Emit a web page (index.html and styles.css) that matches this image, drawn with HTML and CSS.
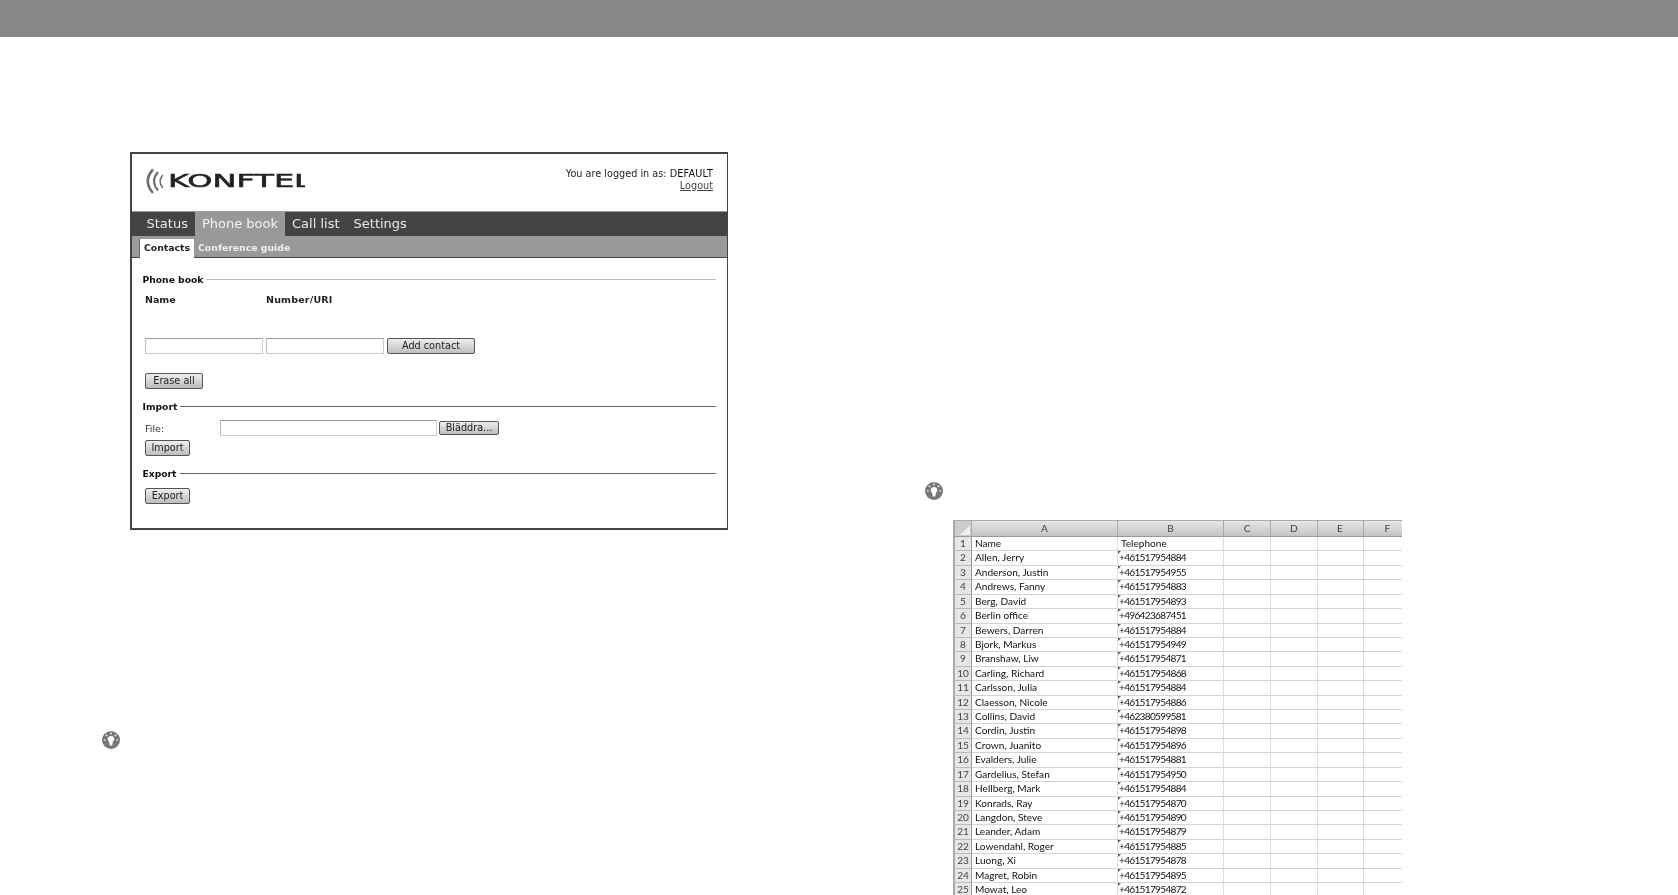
FILE: index.html
```html
<!DOCTYPE html>
<html lang="en">
<head>
<meta charset="utf-8">
<title>Konftel web interface</title>
<link rel="stylesheet" href="styles.css">
</head>
<body>
<div class="topbar"></div>
<main class="columns">
  <section class="col-left">
    <div class="frame">
      <header class="brand">
        <svg class="logo" width="160" height="30" viewBox="0 0 160 30">
          <g fill="none" stroke="#6e6e6e">
            <path d="M8 1.500 Q-2.500 13 8 25" stroke-width="2.600"/>
            <path d="M13 4 Q5 13 13 22.500" stroke-width="2"/>
            <path d="M18 7 Q12 13 18 20" stroke-width="1.500"/>
          </g>
          <text class="logo-text" x="23" y="19" textLength="144" lengthAdjust="spacingAndGlyphs">KONFTEL</text>
        </svg>
        <div class="login">
          <div>You are logged in as: <span class="user">DEFAULT</span></div>
          <a class="logout">Logout</a>
        </div>
      </header>
      <nav class="nav">
        <span class="nav-item">Status</span>
        <span class="nav-item active">Phone book</span>
        <span class="nav-item">Call list</span>
        <span class="nav-item">Settings</span>
      </nav>
      <div class="subnav">
        <span class="tab active">Contacts</span>
        <span class="tab">Conference guide</span>
      </div>
      <div class="panel">
        <div class="legend light"><b>Phone book</b><i></i></div>
        <div class="col-titles"><b class="t-name">Name</b><b class="t-number">Number/URI</b></div>
        <div class="add-row">
          <span class="input w-118"></span>
          <span class="input w-118"></span>
          <span class="btn w-88">Add contact</span>
        </div>
        <div class="erase-row"><span class="btn w-58">Erase all</span></div>
        <div class="legend import"><b>Import</b><i></i></div>
        <div class="file-row">
          <span class="file-label">File:</span>
          <span class="input w-217"></span>
          <span class="btn small w-60">Bläddra...</span>
        </div>
        <div class="import-row"><span class="btn w-45">Import</span></div>
        <div class="legend export"><b>Export</b><i></i></div>
        <div class="export-row"><span class="btn w-45">Export</span></div>
      </div>
    </div>
    <svg class="tip tip-left" width="20" height="20" viewBox="0 0 20 20"><use href="#bulb"/></svg>
  </section>
  <section class="col-right">
    <svg class="tip" width="20" height="20" viewBox="0 0 20 20">
      <g id="bulb">
        <circle cx="10" cy="10" r="9" fill="#777"/>
        <path d="M10 6a3.300 3.300 0 0 1 1.800 6.100L11.300 15.500H8.700L8.200 12.100A3.300 3.300 0 0 1 10 6z" fill="#fff"/>
        <path d="M10 2.300V4.500M4.700 4.700l1.500 1.500M15.300 4.700l-1.500 1.500M2.800 10h2M15.200 10h2" stroke="#fff" stroke-width="1.200"/>
      </g>
    </svg>
    <div class="sheet" id="sheet">
      <div class="h corner"></div><div class="h">A</div><div class="h">B</div><div class="h">C</div><div class="h">D</div><div class="h">E</div><div class="h last">F</div>
      <div class="n">1</div><div class="c">Name</div><div class="c">Telephone</div><div class="c"></div><div class="c"></div><div class="c"></div><div class="c"></div>
      <div class="n">2</div><div class="c">Allen, Jerry</div><div class="c p">+461517954884</div><div class="c"></div><div class="c"></div><div class="c"></div><div class="c"></div>
      <div class="n">3</div><div class="c">Anderson, Justin</div><div class="c p">+461517954955</div><div class="c"></div><div class="c"></div><div class="c"></div><div class="c"></div>
      <div class="n">4</div><div class="c">Andrews, Fanny</div><div class="c p">+461517954883</div><div class="c"></div><div class="c"></div><div class="c"></div><div class="c"></div>
      <div class="n">5</div><div class="c">Berg, David</div><div class="c p">+461517954893</div><div class="c"></div><div class="c"></div><div class="c"></div><div class="c"></div>
      <div class="n">6</div><div class="c">Berlin office</div><div class="c p">+496423687451</div><div class="c"></div><div class="c"></div><div class="c"></div><div class="c"></div>
      <div class="n">7</div><div class="c">Bewers, Darren</div><div class="c p">+461517954884</div><div class="c"></div><div class="c"></div><div class="c"></div><div class="c"></div>
      <div class="n">8</div><div class="c">Bjork, Markus</div><div class="c p">+461517954949</div><div class="c"></div><div class="c"></div><div class="c"></div><div class="c"></div>
      <div class="n">9</div><div class="c">Branshaw, Liw</div><div class="c p">+461517954871</div><div class="c"></div><div class="c"></div><div class="c"></div><div class="c"></div>
      <div class="n">10</div><div class="c">Carling, Richard</div><div class="c p">+461517954868</div><div class="c"></div><div class="c"></div><div class="c"></div><div class="c"></div>
      <div class="n">11</div><div class="c">Carlsson, Julia</div><div class="c p">+461517954884</div><div class="c"></div><div class="c"></div><div class="c"></div><div class="c"></div>
      <div class="n">12</div><div class="c">Claesson, Nicole</div><div class="c p">+461517954886</div><div class="c"></div><div class="c"></div><div class="c"></div><div class="c"></div>
      <div class="n">13</div><div class="c">Collins, David</div><div class="c p">+462380599581</div><div class="c"></div><div class="c"></div><div class="c"></div><div class="c"></div>
      <div class="n">14</div><div class="c">Cordin, Justin</div><div class="c p">+461517954898</div><div class="c"></div><div class="c"></div><div class="c"></div><div class="c"></div>
      <div class="n">15</div><div class="c">Crown, Juanito</div><div class="c p">+461517954896</div><div class="c"></div><div class="c"></div><div class="c"></div><div class="c"></div>
      <div class="n">16</div><div class="c">Evalders, Julie</div><div class="c p">+461517954881</div><div class="c"></div><div class="c"></div><div class="c"></div><div class="c"></div>
      <div class="n">17</div><div class="c">Gardelius, Stefan</div><div class="c p">+461517954950</div><div class="c"></div><div class="c"></div><div class="c"></div><div class="c"></div>
      <div class="n">18</div><div class="c">Hellberg, Mark</div><div class="c p">+461517954884</div><div class="c"></div><div class="c"></div><div class="c"></div><div class="c"></div>
      <div class="n">19</div><div class="c">Konrads, Ray</div><div class="c p">+461517954870</div><div class="c"></div><div class="c"></div><div class="c"></div><div class="c"></div>
      <div class="n">20</div><div class="c">Langdon, Steve</div><div class="c p">+461517954890</div><div class="c"></div><div class="c"></div><div class="c"></div><div class="c"></div>
      <div class="n">21</div><div class="c">Leander, Adam</div><div class="c p">+461517954879</div><div class="c"></div><div class="c"></div><div class="c"></div><div class="c"></div>
      <div class="n">22</div><div class="c">Lowendahl, Roger</div><div class="c p">+461517954885</div><div class="c"></div><div class="c"></div><div class="c"></div><div class="c"></div>
      <div class="n">23</div><div class="c">Luong, Xi</div><div class="c p">+461517954878</div><div class="c"></div><div class="c"></div><div class="c"></div><div class="c"></div>
      <div class="n">24</div><div class="c">Magret, Robin</div><div class="c p">+461517954895</div><div class="c"></div><div class="c"></div><div class="c"></div><div class="c"></div>
      <div class="n">25</div><div class="c">Mowat, Leo</div><div class="c p">+461517954872</div><div class="c"></div><div class="c"></div><div class="c"></div><div class="c"></div>
    </div>
  </section>
</main>
</body>
</html>
```
FILE: styles.css
```css
html, body { margin: 0; padding: 0; height: 895px; overflow: hidden; background: #fff; }
body { font-family: "DejaVu Sans", sans-serif; color: #222; }

.topbar { height: 37px; background: #888785; }
.columns { display: grid; grid-template-columns: 822px 1fr; }

.col-left { padding: 115px 0 0 101px; }
.col-right { padding: 444px 0 0 102px; }

.tip { display: block; }
.tip-left { margin-top: 200px; }

/* Konftel window */
.frame {
  margin-left: 29px; width: 595px; height: 374px;
  border: 2px solid #444; border-right-width: 1.500px;
  filter: blur(0.35px);
}
.brand { display: flex; justify-content: space-between; border-bottom: 1px solid #999; box-sizing: border-box; height: 58px; }
.logo { margin: 14px 0 0 13px; }
.logo-text { font-family: "DejaVu Sans", sans-serif; font-size: 17px; font-weight: 400; fill: #222; stroke: #222; stroke-width: 0.5px; }
.login { padding: 14px 14px 0 0; text-align: right; font-size: 9.700px; line-height: 12px; color: #222; }
.user { color: #111; letter-spacing: 0.2px; }
.logout { text-decoration: underline; color: #444; }

.nav { display: flex; height: 24px; padding-left: 7.500px; background: #444; align-items: stretch; }
.nav-item { padding: 0 7px; font-size: 13px; line-height: 24px; color: #e8e8e8; }
.nav-item.active { background: #999; color: #f2f2f2; }

.subnav { display: flex; height: 22px; box-sizing: border-box; padding-left: 7px; padding-top: 3px; background: #999; border-bottom: 1px solid #444; }
.tab { padding: 0 4px; font-size: 9.300px; font-weight: 700; line-height: 18px; color: #eee; }
.tab.active { background: #fff; color: #222; height: 19px; border-left: 1px solid #666; box-sizing: border-box; }

.panel { padding: 14px 11px 0 10.500px; font-size: 9.500px; }
.legend { display: flex; align-items: center; gap: 3px; height: 14px; color: #111; font-size: 9.200px; }
.legend b { font-weight: 700; }
.legend i { flex: 1; height: 1px; background: #666; }
.legend.light i { background: #bbb; }
.col-titles { display: flex; margin: 7px 0 0 2.500px; font-weight: 700; color: #222; line-height: 14px; }
.t-name { width: 121px; }
.t-number { letter-spacing: 0.2px; }
.add-row { display: flex; gap: 3px; margin: 31px 0 0 2.500px; }
.erase-row { margin: 19px 0 0 2.500px; }
.file-row { display: flex; align-items: center; margin: 7px 0 0 2.500px; }
.file-label { width: 75px; color: #333; }
.import-row { margin: 4px 0 0 2.500px; }
.export-row { margin: 8px 0 0 2.500px; }
.legend.import { margin-top: 10px; }
.legend.export { margin-top: 10px; }

.input { display: block; box-sizing: border-box; height: 16px; border: 1px solid #ccc; border-top-color: #999; border-left-color: #bbb; background: #fff; }
.btn {
  display: block; box-sizing: border-box; height: 16px;
  border: 1px solid #555; border-radius: 2px;
  background: linear-gradient(#eee, #bdbdbd);
  text-align: center; font-size: 9.700px; line-height: 14px; color: #222;
}
.btn.small { height: 14px; line-height: 12px; margin-left: 2px; }
.w-118 { width: 118px; }
.w-217 { width: 217px; }
.w-88 { width: 88px; }
.w-60 { width: 60px; }
.w-58 { width: 58px; }
.w-45 { width: 45px; }

/* Spreadsheet */
.sheet {
  margin: 19px 0 0 29px; width: 449px; height: 380px; overflow: hidden;
  display: grid; grid-template-columns: 19px 146px 106px 47px 46.500px 46px 38.500px;
  grid-template-rows: 16px; grid-auto-rows: 14.430px;
  border-top: 1px solid #aaa;
  font-family: "Lato", sans-serif; font-size: 10.100px; color: #111;
  filter: blur(0.3px);
}
.h {
  background: linear-gradient(#e6e6e6, #c4c4c4);
  border-right: 1px solid #aaa; border-bottom: 1px solid #999;
  text-align: center; line-height: 14px; color: #444; box-sizing: border-box;
}
.h.last { border-right: 0; padding-left: 9px; }
.corner { background: #ccc; border-left: 2px solid #aaa; position: relative; }
.corner::after {
  content: ""; position: absolute; right: 1px; bottom: 1px;
  border-style: solid; border-width: 0 0 10px 10px; border-color: transparent transparent #eee transparent;
}
.n {
  background: #e6e6e6; border-left: 2px solid #aaa; border-right: 1px solid #999; border-bottom: 1px solid #bbb;
  box-sizing: border-box; text-align: center; line-height: 13px; color: #444;
}
.c {
  position: relative; box-sizing: border-box; padding-left: 3px;
  border-right: 1px solid #ddd; border-bottom: 1px solid #d4d4d4;
  line-height: 13px; white-space: nowrap;
}
.c:nth-child(7n) { border-right: 0; }
.p { letter-spacing: -0.700px; padding-left: 1px; }
.p::before {
  content: ""; position: absolute; left: 0; top: 0;
  border-style: solid; border-width: 3px 3px 0 0; border-color: #555 transparent transparent transparent;
}
```
